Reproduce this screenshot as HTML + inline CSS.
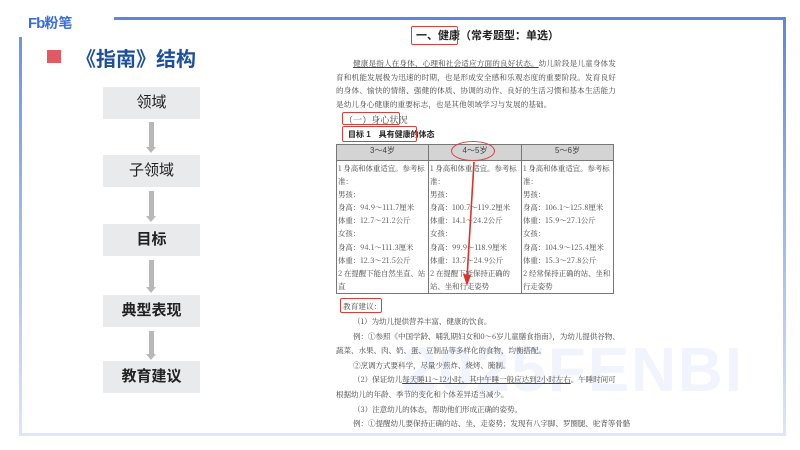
<!DOCTYPE html>
<html><head><meta charset="utf-8"><style>
*{margin:0;padding:0;box-sizing:border-box}
body{width:800px;height:450px;background:#fff;position:relative;overflow:hidden;font-family:"Liberation Sans","Noto Sans CJK SC",sans-serif}
.a{position:absolute}
.box{position:absolute;left:103px;width:97px;height:32px;background:#e9eaeb;text-align:center;line-height:32px;font-size:15px;color:#222}
.arr{position:absolute;left:149px;width:5px;background:#b8b8b8}
.arr:after{content:"";position:absolute;left:-3px;bottom:-5px;border-left:5.5px solid transparent;border-right:5.5px solid transparent;border-top:6px solid #b8b8b8}
.doc{font-family:"Noto Serif CJK SC",serif;color:#444;font-size:7.6px;letter-spacing:0.1px}
table{border-collapse:collapse;position:absolute;left:336px;top:144px;width:278px;font-family:"Noto Serif CJK SC",serif;font-size:7.4px;color:#444}
td,th{border:1px solid #777;vertical-align:top;padding:0 1px}
th{background:#d4d4d4;height:16px;font-weight:normal;font-family:"Liberation Sans","Noto Sans CJK SC",sans-serif;font-size:8px}
td{line-height:13.1px;padding-top:1px}
.rb{position:absolute;border:1.5px solid #d9403c;border-radius:2px}
</style></head><body>
<div class="a" style="left:28px;top:13px;font-size:15px;font-weight:bold;color:#3a6fd8;letter-spacing:-1px">Fb<span style="font-size:14px;letter-spacing:0">粉笔</span></div>
<div class="a" style="left:114px;top:17px;width:672px;height:3px;background:#5b86e6"></div>
<div class="a" style="left:22px;top:20px;width:761px;height:413px;overflow:hidden"><div class="a" style="left:380px;top:315px;font-size:62px;font-weight:bold;color:#f1f4fc;letter-spacing:2px;white-space:nowrap">2025FENBI</div></div>
<div class="a" style="left:783px;top:17px;width:3px;height:419px;background:linear-gradient(#5b86e6,#dce6fb)"></div>
<div class="a" style="left:19px;top:37px;width:3px;height:399px;background:linear-gradient(#6b93ea,#dce6fb)"></div>
<div class="a" style="left:19px;top:433px;width:767px;height:3px;background:#dde6fb"></div>
<div class="a" style="left:47px;top:50px;width:14px;height:13px;background:#e05a63"></div>
<div class="a" style="left:76px;top:43px;font-size:20px;font-weight:bold;color:#1e4f9c">《指南》结构</div>

<div class="box" style="top:87px">领域</div>
<div class="arr" style="top:122px;height:26px"></div>
<div class="box" style="top:155px">子领域</div>
<div class="arr" style="top:191px;height:26px"></div>
<div class="box" style="top:224px;font-weight:bold">目标</div>
<div class="arr" style="top:260px;height:28px"></div>
<div class="box" style="top:295px;font-weight:bold">典型表现</div>
<div class="arr" style="top:331px;height:24px"></div>
<div class="box" style="top:361px;font-weight:bold">教育建议</div>

<div class="a" style="left:416px;top:27px;font-size:11px;font-weight:bold;color:#222;font-family:'Liberation Sans','Noto Sans CJK SC',sans-serif">一、健康（常考题型：单选）</div>
<div class="rb" style="left:411px;top:26px;width:47px;height:19px"></div>
<div class="doc a" style="left:336px;top:57px;width:280px;line-height:13.5px;text-indent:17px;text-align:justify"><span style="text-decoration:underline">健康是指人在身体、心理和社会适应方面的良好状态。</span>幼儿阶段是儿童身体发育和机能发展极为迅速的时期，也是形成安全感和乐观态度的重要阶段。发育良好的身体、愉快的情绪、强健的体质、协调的动作、良好的生活习惯和基本生活能力是幼儿身心健康的重要标志，也是其他领域学习与发展的基础。</div>
<div class="doc a" style="left:344px;top:113px;font-size:9px">（一）身心状况</div>
<div class="rb" style="left:342px;top:112px;width:58px;height:13px"></div>
<div class="a" style="left:348px;top:129px;font-size:8px;font-weight:bold;color:#222">目标 1　具有健康的体态</div>
<div class="rb" style="left:342px;top:126px;width:75px;height:16px"></div>

<table>
<tr><th style="width:92px">3～4岁</th><th style="width:93px">4～5岁</th><th>5～6岁</th></tr>
<tr>
<td>1 身高和体重适宜。参考标准：<br>男孩：<br>身高：94.9～111.7厘米<br>体重：12.7～21.2公斤<br>女孩：<br>身高：94.1～111.3厘米<br>体重：12.3～21.5公斤<br>2 在提醒下能自然坐直、站直</td>
<td>1 身高和体重适宜。参考标准：<br>男孩：<br>身高：100.7～119.2厘米<br>体重：14.1～24.2公斤<br>女孩：<br>身高：99.9～118.9厘米<br>体重：13.7～24.9公斤<br>2 在提醒下能保持正确的站、坐和行走姿势</td>
<td>1 身高和体重适宜。参考标准：<br>男孩：<br>身高：106.1～125.8厘米<br>体重：15.9～27.1公斤<br>女孩：<br>身高：104.9～125.4厘米<br>体重：15.3～27.8公斤<br>2 经常保持正确的站、坐和行走姿势</td>
</tr></table>
<div class="a" style="left:451px;top:141px;width:44px;height:20px;border:1.5px solid #d9403c;border-radius:50%"></div>
<svg class="a" style="left:460px;top:160px" width="20" height="130"><line x1="14" y1="2" x2="7" y2="118" stroke="#e0302a" stroke-width="1.6"/><polygon points="3,114 11,115 7,126" fill="#e0302a"/></svg>

<div class="doc a" style="left:343px;top:301px">教育建议：</div>
<div class="rb" style="left:340px;top:298px;width:42px;height:15px"></div>
<div class="doc a" style="left:336px;top:315px;width:282px;line-height:14.6px;text-align:justify;white-space:nowrap;letter-spacing:-0.1px">
<div style="text-indent:17px">（1）为幼儿提供营养丰富、健康的饮食。</div>
<div style="text-indent:17px">例：①参照《中国学龄、哺乳期妇女和0～6岁儿童膳食指南》，为幼儿提供谷物、</div>
<div>蔬菜、水果、肉、奶、蛋、豆制品等多样化的食物，均衡搭配。</div>
<div style="text-indent:17px">②烹调方式要科学，尽量少煎炸、烧烤、腌制。</div>
<div style="text-indent:17px">（2）保证幼儿<u>每天睡11～12小时，其中午睡一般应达到2小时左右</u>。午睡时间可</div>
<div>根据幼儿的年龄、季节的变化和个体差异适当减少。</div>
<div style="text-indent:17px">（3）注意幼儿的体态，帮助他们形成正确的姿势。</div>
<div style="text-indent:17px">例：①提醒幼儿要保持正确的站、坐、走姿势；发现有八字脚、罗圈腿、驼背等骨骼</div>
</div>
</body></html>
